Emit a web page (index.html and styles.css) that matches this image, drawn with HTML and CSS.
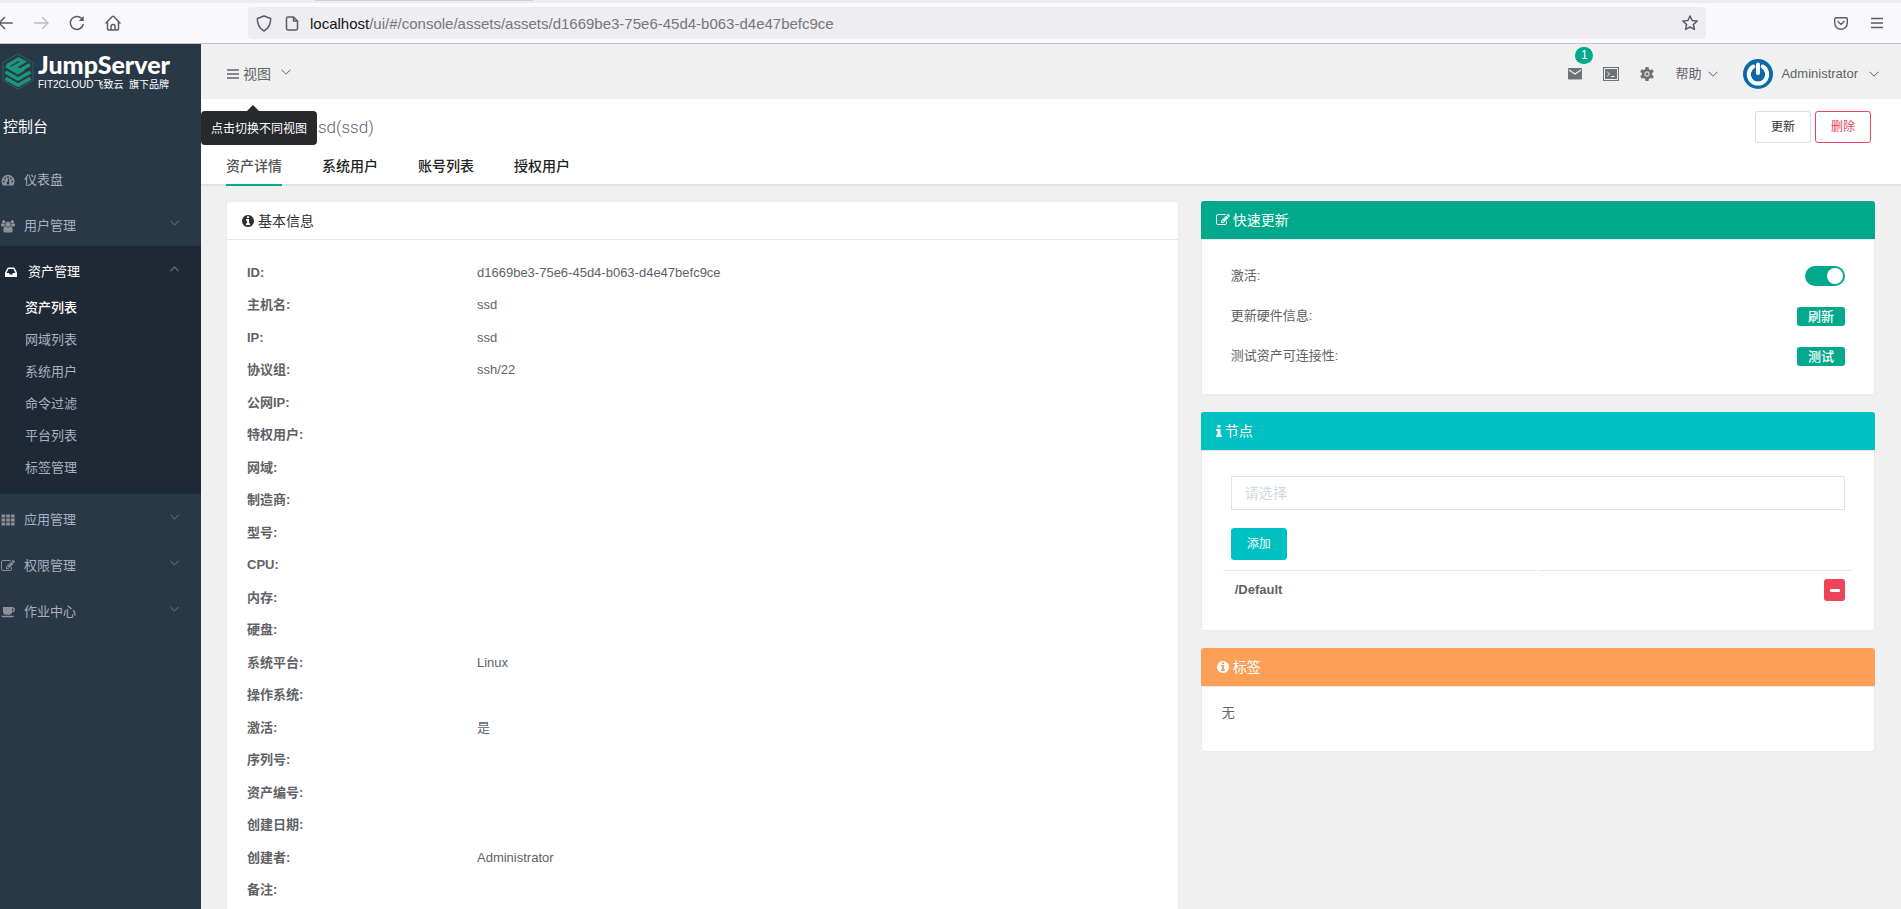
FILE: index.html
```html
<!DOCTYPE html>
<html lang="zh-CN">
<head>
<meta charset="utf-8">
<title>JumpServer</title>
<link rel="stylesheet" href="styles.css">
</head>
<body>
<svg class="defs" aria-hidden="true">
  <symbol id="chev" viewBox="0 0 10 6"><path d="M.5 .7 5 5.2 9.500 .7" fill="none" stroke="currentColor"/></symbol>
  <symbol id="info" viewBox="0 0 1792 1792"><path fill="currentColor" d="M1152 1376v-160q0-14-9-23t-23-9h-96v-512q0-14-9-23t-23-9h-320q-14 0-23 9t-9 23v160q0 14 9 23t23 9h96v320h-96q-14 0-23 9t-9 23v160q0 14 9 23t23 9h448q14 0 23-9t9-23zm-128-896v-160q0-14-9-23t-23-9h-192q-14 0-23 9t-9 23v160q0 14 9 23t23 9h192q14 0 23-9t9-23zm640 416q0 209-103 385.500t-279.500 279.500-385.500 103-385.500-103-279.500-279.500-103-385.500 103-385.500 279.500-279.500 385.500-103 385.500 103 279.500 279.500 103 385.500z"/></symbol>
  <symbol id="edit" viewBox="0 0 1792 1792"><path fill="currentColor" d="M888 1184l116-116-152-152-116 116v56h96v96h56zm440-720q-16-16-33 1l-350 350q-17 17-1 33t33-1l350-350q17-17 1-33zm80 594v190q0 119-84.500 203.500t-203.500 84.500h-832q-119 0-203.500-84.500t-84.500-203.500v-832q0-119 84.500-203.500t203.500-84.500h832q63 0 117 25 15 7 18 23 3 17-9 29l-49 49q-14 14-32 8-23-6-45-6h-832q-66 0-113 47t-47 113v832q0 66 47 113t113 47h832q66 0 113-47t47-113v-126q0-13 9-22l64-64q15-15 35-7t20 29zm-96-738l288 288-672 672h-288v-288zm444 132l-92 92-288-288 92-92q28-28 68-28t68 28l152 152q28 28 28 68t-28 68z"/></symbol>
</svg>

<header class="browser">
  <div class="tabstrip"><span class="tab-edge"></span></div>
  <div class="toolbar">
    <div class="nav-buttons">
      <button type="button" aria-label="后退"><svg width="16" height="16" viewBox="0 0 16 16" fill="none" stroke="#5b5b66" stroke-width="1.500" stroke-linecap="round" stroke-linejoin="round"><path d="M15.300 8H2M7.500 2.500 2 8l5.500 5.500"/></svg></button>
      <button type="button" aria-label="前进"><svg width="16" height="16" viewBox="0 0 16 16" fill="none" stroke="#bdbdc3" stroke-width="1.500" stroke-linecap="round" stroke-linejoin="round"><path d="M1.500 8h13M9.500 2.500 15 8l-5.500 5.500"/></svg></button>
      <button type="button" aria-label="刷新页面"><svg width="16" height="16" viewBox="0 0 16 16" fill="none" stroke="#5b5b66" stroke-width="1.500" stroke-linecap="round"><path d="M14.200 9.500A6.500 6.500 0 1 1 12.500 3.300"/><path d="M14.700 1v5H9.700z" fill="#5b5b66" stroke="none"/></svg></button>
      <button type="button" aria-label="主页"><svg width="16" height="16" viewBox="0 0 16 16" fill="none" stroke="#5b5b66" stroke-width="1.500" stroke-linecap="round" stroke-linejoin="round"><path d="M1 8 7.300 1.500q.7-.7 1.400 0L15 8M2.500 7v6.500q0 1.500 1.500 1.500h8q1.500 0 1.500-1.500V7M6 15v-3.500a2 2 0 0 1 4 0V15"/></svg></button>
    </div>
    <div class="urlbar">
      <svg width="16" height="17" viewBox="0 0 16 17" fill="none" stroke="#5b5b66" stroke-width="1.500" stroke-linejoin="round"><path d="M8 1 14.600 3.500Q15.200 11.500 8 16 .8 11.500 1.400 3.500z"/></svg>
      <svg width="14" height="15" viewBox="0 0 14 15" fill="none" stroke="#5b5b66" stroke-width="1.500" stroke-linejoin="round"><path d="M8.500 1H3Q1.500 1 1.500 2.500v10Q1.500 14 3 14h8q1.500 0 1.500-1.500V5zV5h4"/></svg>
      <span class="url"><b>localhost</b>/ui/#/console/assets/assets/d1669be3-75e6-45d4-b063-d4e47befc9ce</span>
      <svg width="16" height="16" viewBox="0 0 16 16" fill="none" stroke="#5b5b66" stroke-width="1.500" stroke-linejoin="round"><path d="m8 1 2.100 4.500 5 .6-3.700 3.400 1 4.900L8 12l-4.400 2.400 1-4.900L.9 6.100l5-.6z"/></svg>
    </div>
    <div class="tool-right">
      <svg width="14" height="13" viewBox="0 0 14 13" fill="none" stroke="#5b5b66" stroke-width="1.400" stroke-linecap="round" stroke-linejoin="round"><path d="M2 .8h10q1.300 0 1.300 1.300V6A6.300 6.300 0 0 1 .7 6V2.100Q.7.8 2 .8zM4 4.500l3 3 3-3"/></svg>
      <svg width="12" height="12" viewBox="0 0 12 12" stroke="#5b5b66" stroke-width="1.300"><path d="M0 1.500h12M0 6h12M0 10.500h12"/></svg>
    </div>
  </div>
</header>

<div class="app">
  <aside class="sidebar">
    <a class="logo" href="#">
      <svg width="32" height="37" viewBox="0 0 32 37"><path d="M16 1 31 9.500v18L16 36 1 27.500v-18z" fill="none" stroke="#1f7568" stroke-width=".8"/><g fill="none" stroke="#1d977c" stroke-width="3.400"><path d="M3.500 19 16 26l12.500-7M3.500 25.200 16 32.200l12.500-7"/><path d="M5.500 12.500 16.500 6l5 2.800-9 5 5.500 3.400 10-5.700M4 12.800l12 6.700 6-3.400"/></g></svg>
      <span class="brand"><strong>JumpServer</strong><small>FIT2CLOUD飞致云&nbsp; 旗下品牌</small></span>
    </a>
    <h2 class="console">控制台</h2>
    <nav>
      <ul class="menu">
        <li><a href="#"><svg width="14" height="14" viewBox="0 0 14 14"><path fill="currentColor" d="M2 12.500a6.500 6.500 0 1 1 10 0z"/><g fill="#293846"><circle cx="2.800" cy="8.500" r=".9"/><circle cx="4" cy="5.300" r=".9"/><circle cx="7" cy="4" r=".9"/><circle cx="10" cy="5.300" r=".9"/><circle cx="11.200" cy="8.500" r=".9"/><path d="m7.300 5.500 1 .3L8 9a1.400 1.400 0 1 1-1.400-.3z"/></g></svg><span>仪表盘</span></a></li>
        <li><a href="#"><svg width="14" height="14" viewBox="0 0 14 14" fill="currentColor"><circle cx="7" cy="5.200" r="2.600"/><circle cx="2.700" cy="2.700" r="1.700"/><circle cx="11.300" cy="2.700" r="1.700"/><path d="M0 5.500q0-1 1-1h2.500q0 2 1 3H1.500Q0 7.500 0 6zM14 5.500q0-1-1-1h-2.500q0 2-1 3h3Q14 7.500 14 6zM2.300 11.500q0-4 2.400-4Q7 9.300 9.300 7.500q2.400 0 2.400 4 0 2-2 2H4.300q-2 0-2-2z"/></svg><span>用户管理</span><svg class="chev" width="9" height="6"><use href="#chev"/></svg></a></li>
        <li class="open"><a href="#"><svg width="12" height="12" viewBox="0 0 12 12"><path fill="currentColor" fill-rule="evenodd" d="M2.800 1.500h6.400Q12 6 12 7.500v3q0 .5-.5.5H.5q-.5 0-.5-.5v-3Q0 6 2.800 1.500zM3.500 3 1.600 7H4l.7 1.500h2.600L8 7h2.400L8.500 3z"/></svg><span>资产管理</span><svg class="chev up" width="9" height="6"><use href="#chev"/></svg></a>
          <ul class="submenu">
            <li><a class="current" href="#">资产列表</a></li>
            <li><a href="#">网域列表</a></li>
            <li><a href="#">系统用户</a></li>
            <li><a href="#">命令过滤</a></li>
            <li><a href="#">平台列表</a></li>
            <li><a href="#">标签管理</a></li>
          </ul>
        </li>
        <li><a href="#"><svg width="14" height="14" viewBox="0 0 14 14" fill="currentColor"><path d="M.5 1.500h3.700v3H.5zM5.200 1.500h3.700v3H5.200zM9.900 1.500h3.700v3H9.900zM.5 5.500h3.700v3H.5zM5.200 5.500h3.700v3H5.200zM9.900 5.500h3.700v3H9.900zM.5 9.500h3.700v3H.5zM5.200 9.500h3.700v3H5.200zM9.900 9.500h3.700v3H9.900z"/></svg><span>应用管理</span><svg class="chev" width="9" height="6"><use href="#chev"/></svg></a></li>
        <li><a href="#"><svg width="14" height="14"><use href="#edit"/></svg><span>权限管理</span><svg class="chev" width="9" height="6"><use href="#chev"/></svg></a></li>
        <li><a href="#"><svg width="14" height="14" viewBox="0 0 14 14" fill="currentColor"><path fill-rule="evenodd" d="M2 2h9q3 0 3 2.500T11 7.300q0 2.400-2.500 2.400H4.500Q2 9.700 2 7.300zM11 3.400v2.500q1.600 0 1.600-1.300T11 3.400zM.3 10.800h12.700q0 1.500-1.700 1.500H2Q.3 12.300.3 10.800z"/></svg><span>作业中心</span><svg class="chev" width="9" height="6"><use href="#chev"/></svg></a></li>
      </ul>
    </nav>
  </aside>

  <div class="main">
    <div class="topbar">
      <button type="button" class="view-switch" aria-describedby="view-tip">
        <svg width="12" height="10" viewBox="0 0 12 10" stroke="#84878d" stroke-width="2"><path d="M0 1h12M0 5h12M0 9h12"/></svg>
        <span>视图</span>
        <svg class="chev" width="10" height="6"><use href="#chev"/></svg>
        <span class="tooltip" role="tooltip" id="view-tip">点击切换不同视图</span>
      </button>
      <div class="top-right">
        <button type="button" class="mail" aria-label="消息"><svg width="14" height="12" viewBox="0 0 14 12"><rect width="14" height="11.500" rx="1" fill="#6f7275"/><path d="m1 2 6 4 6-4" fill="none" stroke="#f0f0f0" stroke-width="1.200"/></svg><span class="badge">1</span></button>
        <button type="button" aria-label="终端"><svg width="16" height="14" viewBox="0 0 16 14"><path fill="#6f7275" d="M0 0h16v14H0z"/><path d="M1.500 1.500h13v11h-13z" fill="none" stroke="#f0f0f0"/><path d="M4 4.500 6.500 7 4 9.500M8 9.500h3.500" fill="none" stroke="#f0f0f0"/></svg></button>
        <button type="button" aria-label="设置"><svg width="14" height="14" viewBox="0 0 14 14"><g fill="#6f7275"><circle cx="7" cy="7" r="5.200"/><path d="M5.500 0h3l.5 3H5zM5.500 14h3l.5-3H5zM.2 4.800l1.500-2.600 2.800 1.200-2 3.400zM12.300 2.200l1.500 2.600-2.300 2-2-3.400zM1.700 11.800.2 9.200l2.300-2 2 3.400zM13.800 9.200l-1.500 2.600-2.800-1.200 2-3.400z"/></g><circle cx="7" cy="7" r="2" fill="none" stroke="#d0d0d0" stroke-width="1.300"/></svg></button>
        <button type="button" class="drop">帮助<svg class="chev" width="10" height="6"><use href="#chev"/></svg></button>
        <button type="button" class="drop user"><svg class="avatar" width="30" height="30" viewBox="0 0 30 30"><circle cx="15" cy="15" r="15" fill="#0a6aa8"/><path d="M10.300 7.500A9.200 9.200 0 1 0 19.700 7.500" fill="none" stroke="#fff" stroke-width="4" stroke-linecap="round"/><path d="M15 5.500V14" stroke="#fff" stroke-width="4" stroke-linecap="round"/></svg><span>Administrator</span><svg class="chev" width="10" height="6"><use href="#chev"/></svg></button>
      </div>
    </div>

    <section class="page-head">
      <div class="title-row">
        <h1>sd(ssd)</h1>
        <div class="actions"><button type="button" class="btn">更新</button><button type="button" class="btn danger">删除</button></div>
      </div>
      <nav class="tabs">
        <a class="active" href="#">资产详情</a>
        <a href="#">系统用户</a>
        <a href="#">账号列表</a>
        <a href="#">授权用户</a>
      </nav>
    </section>

    <div class="content">
      <div class="col-left">
        <section class="card">
          <h3 class="card-head"><svg width="14" height="14"><use href="#info"/></svg>基本信息</h3>
          <dl class="details">
            <div><dt>ID:</dt><dd>d1669be3-75e6-45d4-b063-d4e47befc9ce</dd></div>
            <div><dt>主机名:</dt><dd>ssd</dd></div>
            <div><dt>IP:</dt><dd>ssd</dd></div>
            <div><dt>协议组:</dt><dd>ssh/22</dd></div>
            <div><dt>公网IP:</dt><dd></dd></div>
            <div><dt>特权用户:</dt><dd></dd></div>
            <div><dt>网域:</dt><dd></dd></div>
            <div><dt>制造商:</dt><dd></dd></div>
            <div><dt>型号:</dt><dd></dd></div>
            <div><dt>CPU:</dt><dd></dd></div>
            <div><dt>内存:</dt><dd></dd></div>
            <div><dt>硬盘:</dt><dd></dd></div>
            <div><dt>系统平台:</dt><dd>Linux</dd></div>
            <div><dt>操作系统:</dt><dd></dd></div>
            <div><dt>激活:</dt><dd>是</dd></div>
            <div><dt>序列号:</dt><dd></dd></div>
            <div><dt>资产编号:</dt><dd></dd></div>
            <div><dt>创建日期:</dt><dd></dd></div>
            <div><dt>创建者:</dt><dd>Administrator</dd></div>
            <div><dt>备注:</dt><dd></dd></div>
          </dl>
        </section>
      </div>
      <div class="col-right">
        <section class="card">
          <h3 class="card-head green"><svg width="14" height="14"><use href="#edit"/></svg>快速更新</h3>
          <div class="quick">
            <div class="quick-row"><label for="active">激活:</label><input class="switch" type="checkbox" role="switch" id="active" checked></div>
            <div class="quick-row"><span>更新硬件信息:</span><button type="button" class="mini">刷新</button></div>
            <div class="quick-row"><span>测试资产可连接性:</span><button type="button" class="mini">测试</button></div>
          </div>
        </section>
        <section class="card">
          <h3 class="card-head cyan"><svg width="6" height="12" viewBox="0 0 6 12" fill="#fff"><path d="M1.500 0h3v2.500h-3zM.3 4h4.200v5.800h1.200V12H.3V9.800h1.200V6H.3z"/></svg>节点</h3>
          <div class="nodes">
            <input class="node-input" type="text" placeholder="请选择" aria-label="节点">
            <button type="button" class="btn info">添加</button>
            <table class="node-table"><tbody><tr><td><b>/Default</b></td><td><button type="button" class="remove" aria-label="移除"><svg width="10" height="3"><rect width="10" height="3" rx="1" fill="#fff"/></svg></button></td></tr></tbody></table>
          </div>
        </section>
        <section class="card">
          <h3 class="card-head orange"><svg width="14" height="14"><use href="#info"/></svg>标签</h3>
          <p class="labels">无</p>
        </section>
      </div>
    </div>
  </div>
</div>
</body>
</html>
```
FILE: styles.css
```css
* { box-sizing: border-box; }
body {
  margin: 0;
  height: 100vh;
  display: flex;
  flex-direction: column;
  overflow: hidden;
  background: #f0f0f0;
  color: #606266;
  font: 13px/18px "Liberation Sans", "Noto Sans CJK SC", sans-serif;
}
.defs { position: absolute; width: 0; height: 0; }
h1, h2, h3, p, ul, dl, dd { margin: 0; padding: 0; }
ul { list-style: none; }
a { color: inherit; text-decoration: none; }
button { margin: 0; padding: 0; border: 0; background: none; color: inherit; font: inherit; cursor: pointer; }
svg { display: block; flex: none; }

/* Browser chrome */
.browser { flex: none; border-bottom: 1px solid #c4c4c8; background: #f9f9fb; }
.tabstrip { height: 3px; padding-left: 315px; background: #ededf0; }
.tab-edge { display: block; width: 218px; height: 1px; background: #cfcfd2; }
.toolbar { display: flex; align-items: center; height: 40px; padding-right: 18px; }
.nav-buttons { display: flex; gap: 20px; width: 248px; margin-left: -3px; }
.urlbar { flex: 1; display: flex; align-items: center; height: 32px; margin-right: 128px; margin-left: 3px; padding: 0 8px; border-radius: 4px; background: #eeedf1; }
.urlbar svg + svg { margin-left: 13px; }
.url { flex: 1; margin-left: 11px; padding-top: 1px; color: #77777c; font: 15px/18px "Liberation Sans", sans-serif; white-space: nowrap; }
.url b { color: #15141a; font-weight: 400; }
.tool-right { display: flex; align-items: center; gap: 23px; }

.app { flex: 1; display: flex; min-height: 0; }

/* Sidebar */
.sidebar { flex: none; width: 201px; background: #293846; color: #a7b1c2; }
.logo { display: flex; gap: 4px; height: 55px; padding: 9px 2px 0; color: #fff; }
.brand { display: flex; flex-direction: column; gap: 4px; }
.brand strong { font: 900 25px/22px Lato, sans-serif; }
.brand small { font-size: 10px; line-height: 12px; }
.console { padding: 17px 3px 16px; color: #fff; font-size: 15px; line-height: 22px; font-weight: 400; }
.menu > li > a { display: flex; align-items: center; height: 46px; padding: 6px 22px 0 1px; }
.menu > li > a > svg:first-child { color: #8d9097; }
.menu > li > a > span { margin-left: 9px; }
.menu .chev { margin: 0 0 6px auto; opacity: .6; }
.menu .up { transform: rotate(180deg); }
.menu > .open { padding-bottom: 10px; background: #1f2935; color: #fff; }
.menu > .open > a { padding-left: 5px; }
.menu > .open > a > svg:first-child { color: #fff; }
.menu > .open > a > span { margin-left: 11px; }
.submenu a { display: block; padding: 7px 25px; color: #a7b1c2; }
.submenu .current { color: #fff; font-weight: 500; }

/* Top bar */
.main { flex: 1; min-width: 0; }
.topbar { display: flex; justify-content: space-between; align-items: center; height: 55px; padding: 4px 22px 0 26px; }
.view-switch { position: relative; display: flex; align-items: center; gap: 4px; font-size: 14px; }
.view-switch .chev { margin: 0 0 3px 6px; }
.tooltip { position: absolute; top: 46px; left: -26px; padding: 9px 10px 7px; border-radius: 4px; background: #28292b; color: #fff; font-size: 12px; line-height: 18px; white-space: nowrap; z-index: 2; }
.tooltip::before { content: ""; position: absolute; top: -6px; left: 46px; border: 6px solid transparent; border-top: 0; border-bottom-color: #28292b; }
.top-right { display: flex; align-items: center; gap: 21px; }
.mail { position: relative; }
.badge { position: absolute; top: -21px; left: 7px; min-width: 18px; border-radius: 9px; background: #00a98b; color: #fff; font-size: 12px; line-height: 17px; text-align: center; }
.drop { display: flex; align-items: center; gap: 7px; }
.user { gap: 8px; margin-left: 4px; }
.user .chev { margin-left: 3px; }

/* Page header */
.page-head { border-bottom: 2px solid #dfe4e8; background: #fff; }
.title-row { display: flex; justify-content: space-between; align-items: center; padding: 12px 30px 0 117px; }
h1 { font: 300 17px/24px Roboto, sans-serif; }
.actions { display: flex; gap: 4px; }
.btn { width: 56px; height: 32px; border: 1px solid #d9dce3; border-radius: 3px; background: #fff; color: #303133; font-size: 12px; }
.danger { border-color: #ed4557; color: #ed4557; }
.info { border-color: #00c0c2; background: #00c0c2; color: #fff; }
.tabs { display: flex; gap: 40px; padding: 13px 25px 0; color: #222; font-size: 14px; line-height: 20px; font-weight: 500; }
.tabs a { height: 30px; margin-bottom: -2px; border-bottom: 2px solid transparent; }
.tabs .active { color: #555; border-color: #00a98b; }

/* Content */
.content { display: grid; grid-template-columns: 7fr 5fr; align-items: start; padding: 15px 15px 0 14px; }
.col-left, .col-right { min-width: 0; padding: 0 11px; }
.col-right { display: grid; gap: 17px; }
.card { border: 1px solid #e7eaf0; border-radius: 3px; background: #fff; }
.card-head { display: flex; align-items: center; gap: 3px; height: 38px; padding: 0 14px; border-bottom: 1px solid #e4e6ea; color: #303133; font-size: 14px; font-weight: 400; }
.green, .cyan, .orange { height: 39px; margin: -1px -1px 0; padding-left: 15px; border-radius: 3px 3px 0 0; color: #fff; }
.green { background: #00a98b; }
.cyan { background: #00c0c2; }
.orange { background: #fca058; }
.details { padding: 17px 20px 20px; }
.details > div { display: grid; grid-template-columns: 230px 1fr; padding: 7px 0; }
.details > div:nth-child(even) { padding-bottom: 8px; }
.details dt { font-weight: 700; }

.quick { padding: 16px 29px 18px; }
.quick-row { display: flex; justify-content: space-between; align-items: center; height: 40px; }
.switch { appearance: none; display: flex; justify-content: flex-end; width: 40px; height: 20px; margin: 0; padding: 2px; border-radius: 10px; background: #00a98b; }
.switch::before { content: ""; width: 16px; height: 16px; border-radius: 50%; background: #fff; }
.mini { width: 48px; height: 19px; border-radius: 3px; background: #00a98b; color: #fff; line-height: 19px; font-weight: 500; }

.nodes { padding: 25px 29px 19px; }
.node-input { display: block; width: 100%; height: 34px; margin-bottom: 18px; padding: 0 13px; border: 1px solid #dfe2e6; outline: 0; font: inherit; font-size: 14px; }
.node-input::placeholder { color: #d3d7df; }
.nodes .btn { display: block; }
.node-table { width: calc(100% + 20px); margin: 8px -10px 0; border-spacing: 2px; }
.node-table td { width: 50%; padding: 8px 12px; border-top: 1px solid #e4e6ea; }
.node-table td + td { padding-right: 8px; }
.remove { display: flex; align-items: center; justify-content: center; width: 21px; height: 22px; margin-left: auto; border-radius: 3px; background: #ed4557; }
.labels { padding: 17px 20px 29px; }
```
